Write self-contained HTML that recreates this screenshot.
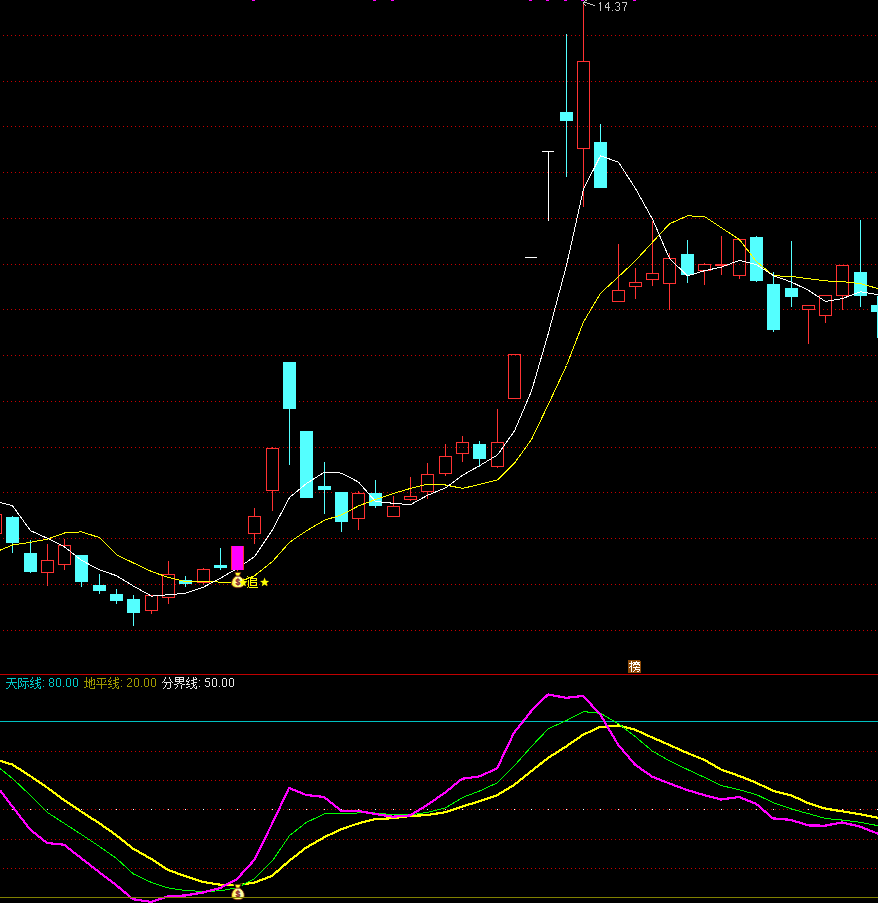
<!DOCTYPE html>
<html><head><meta charset="utf-8"><style>
html,body{margin:0;padding:0;background:#000;width:878px;height:903px;overflow:hidden}
</style></head><body>
<svg width="878" height="903" viewBox="0 0 878 903" style="position:absolute;left:0;top:0">
<rect x="0" y="0" width="878" height="903" fill="#000"/>
<defs><pattern id="dots" x="3" y="0" width="4" height="1" patternUnits="userSpaceOnUse"><rect x="0" y="0" width="1" height="1" fill="#c80000"/></pattern></defs>
<g shape-rendering="crispEdges">
<rect x="3" y="35" width="875" height="1" fill="url(#dots)"/>
<rect x="3" y="81" width="875" height="1" fill="url(#dots)"/>
<rect x="3" y="126" width="875" height="1" fill="url(#dots)"/>
<rect x="3" y="172" width="875" height="1" fill="url(#dots)"/>
<rect x="3" y="218" width="875" height="1" fill="url(#dots)"/>
<rect x="3" y="264" width="875" height="1" fill="url(#dots)"/>
<rect x="3" y="309" width="875" height="1" fill="url(#dots)"/>
<rect x="3" y="355" width="875" height="1" fill="url(#dots)"/>
<rect x="3" y="401" width="875" height="1" fill="url(#dots)"/>
<rect x="3" y="447" width="875" height="1" fill="url(#dots)"/>
<rect x="3" y="492" width="875" height="1" fill="url(#dots)"/>
<rect x="3" y="538" width="875" height="1" fill="url(#dots)"/>
<rect x="3" y="584" width="875" height="1" fill="url(#dots)"/>
<rect x="3" y="630" width="875" height="1" fill="url(#dots)"/>
<rect x="3" y="751" width="875" height="1" fill="url(#dots)"/>
<rect x="3" y="780" width="875" height="1" fill="url(#dots)"/>
<rect x="3" y="809" width="875" height="1" fill="url(#dots)"/>
<rect x="3" y="839" width="875" height="1" fill="url(#dots)"/>
<rect x="3" y="868" width="875" height="1" fill="url(#dots)"/>
<rect x="12" y="809" width="1" height="1" fill="#fff"/>
<rect x="30" y="809" width="1" height="1" fill="#fff"/>
<rect x="47" y="809" width="1" height="1" fill="#fff"/>
<rect x="64" y="809" width="1" height="1" fill="#fff"/>
<rect x="81" y="809" width="1" height="1" fill="#fff"/>
<rect x="99" y="809" width="1" height="1" fill="#fff"/>
<rect x="116" y="809" width="1" height="1" fill="#fff"/>
<rect x="133" y="809" width="1" height="1" fill="#fff"/>
<rect x="151" y="809" width="1" height="1" fill="#fff"/>
<rect x="168" y="809" width="1" height="1" fill="#fff"/>
<rect x="185" y="809" width="1" height="1" fill="#fff"/>
<rect x="203" y="809" width="1" height="1" fill="#fff"/>
<rect x="220" y="809" width="1" height="1" fill="#fff"/>
<rect x="237" y="809" width="1" height="1" fill="#fff"/>
<rect x="254" y="809" width="1" height="1" fill="#fff"/>
<rect x="272" y="809" width="1" height="1" fill="#fff"/>
<rect x="289" y="809" width="1" height="1" fill="#fff"/>
<rect x="306" y="809" width="1" height="1" fill="#fff"/>
<rect x="324" y="809" width="1" height="1" fill="#fff"/>
<rect x="341" y="809" width="1" height="1" fill="#fff"/>
<rect x="358" y="809" width="1" height="1" fill="#fff"/>
<rect x="375" y="809" width="1" height="1" fill="#fff"/>
<rect x="393" y="809" width="1" height="1" fill="#fff"/>
<rect x="410" y="809" width="1" height="1" fill="#fff"/>
<rect x="427" y="809" width="1" height="1" fill="#fff"/>
<rect x="445" y="809" width="1" height="1" fill="#fff"/>
<rect x="462" y="809" width="1" height="1" fill="#fff"/>
<rect x="479" y="809" width="1" height="1" fill="#fff"/>
<rect x="497" y="809" width="1" height="1" fill="#fff"/>
<rect x="514" y="809" width="1" height="1" fill="#fff"/>
<rect x="531" y="809" width="1" height="1" fill="#fff"/>
<rect x="548" y="809" width="1" height="1" fill="#fff"/>
<rect x="566" y="809" width="1" height="1" fill="#fff"/>
<rect x="583" y="809" width="1" height="1" fill="#fff"/>
<rect x="600" y="809" width="1" height="1" fill="#fff"/>
<rect x="618" y="809" width="1" height="1" fill="#fff"/>
<rect x="635" y="809" width="1" height="1" fill="#fff"/>
<rect x="652" y="809" width="1" height="1" fill="#fff"/>
<rect x="669" y="809" width="1" height="1" fill="#fff"/>
<rect x="687" y="809" width="1" height="1" fill="#fff"/>
<rect x="704" y="809" width="1" height="1" fill="#fff"/>
<rect x="721" y="809" width="1" height="1" fill="#fff"/>
<rect x="739" y="809" width="1" height="1" fill="#fff"/>
<rect x="756" y="809" width="1" height="1" fill="#fff"/>
<rect x="773" y="809" width="1" height="1" fill="#fff"/>
<rect x="791" y="809" width="1" height="1" fill="#fff"/>
<rect x="808" y="809" width="1" height="1" fill="#fff"/>
<rect x="825" y="809" width="1" height="1" fill="#fff"/>
<rect x="842" y="809" width="1" height="1" fill="#fff"/>
<rect x="860" y="809" width="1" height="1" fill="#fff"/>
<rect x="877" y="809" width="1" height="1" fill="#fff"/>
<rect x="0" y="674" width="878" height="1" fill="#c00000"/>
<rect x="0" y="721" width="878" height="1" fill="#00c0c0"/>
</g>
<g shape-rendering="crispEdges">
<rect x="-11" y="514" width="13" height="1" fill="#ff3232"/>
<rect x="-11" y="533" width="13" height="1" fill="#ff3232"/>
<rect x="-11" y="514" width="1" height="20" fill="#ff3232"/>
<rect x="1" y="514" width="1" height="20" fill="#ff3232"/>
<rect x="12" y="516" width="1" height="1" fill="#54ffff"/>
<rect x="12" y="543" width="1" height="10" fill="#54ffff"/>
<rect x="6" y="517" width="13" height="26" fill="#54ffff"/>
<rect x="30" y="540" width="1" height="13" fill="#54ffff"/>
<rect x="30" y="572" width="1" height="1" fill="#54ffff"/>
<rect x="24" y="553" width="13" height="19" fill="#54ffff"/>
<rect x="47" y="544" width="1" height="16" fill="#ff3232"/>
<rect x="47" y="573" width="1" height="13" fill="#ff3232"/>
<rect x="41" y="560" width="13" height="1" fill="#ff3232"/>
<rect x="41" y="572" width="13" height="1" fill="#ff3232"/>
<rect x="41" y="560" width="1" height="13" fill="#ff3232"/>
<rect x="53" y="560" width="1" height="13" fill="#ff3232"/>
<rect x="64" y="539" width="1" height="6" fill="#ff3232"/>
<rect x="64" y="565" width="1" height="5" fill="#ff3232"/>
<rect x="58" y="545" width="13" height="1" fill="#ff3232"/>
<rect x="58" y="564" width="13" height="1" fill="#ff3232"/>
<rect x="58" y="545" width="1" height="20" fill="#ff3232"/>
<rect x="70" y="545" width="1" height="20" fill="#ff3232"/>
<rect x="81" y="582" width="1" height="5" fill="#54ffff"/>
<rect x="75" y="555" width="13" height="27" fill="#54ffff"/>
<rect x="99" y="574" width="1" height="11" fill="#54ffff"/>
<rect x="99" y="591" width="1" height="3" fill="#54ffff"/>
<rect x="93" y="585" width="13" height="6" fill="#54ffff"/>
<rect x="116" y="589" width="1" height="5" fill="#54ffff"/>
<rect x="116" y="601" width="1" height="3" fill="#54ffff"/>
<rect x="110" y="594" width="13" height="7" fill="#54ffff"/>
<rect x="133" y="595" width="1" height="4" fill="#54ffff"/>
<rect x="133" y="613" width="1" height="13" fill="#54ffff"/>
<rect x="127" y="599" width="13" height="14" fill="#54ffff"/>
<rect x="151" y="611" width="1" height="3" fill="#ff3232"/>
<rect x="145" y="595" width="13" height="1" fill="#ff3232"/>
<rect x="145" y="610" width="13" height="1" fill="#ff3232"/>
<rect x="145" y="595" width="1" height="16" fill="#ff3232"/>
<rect x="157" y="595" width="1" height="16" fill="#ff3232"/>
<rect x="168" y="561" width="1" height="13" fill="#ff3232"/>
<rect x="168" y="598" width="1" height="6" fill="#ff3232"/>
<rect x="162" y="574" width="13" height="1" fill="#ff3232"/>
<rect x="162" y="597" width="13" height="1" fill="#ff3232"/>
<rect x="162" y="574" width="1" height="24" fill="#ff3232"/>
<rect x="174" y="574" width="1" height="24" fill="#ff3232"/>
<rect x="185" y="576" width="1" height="4" fill="#54ffff"/>
<rect x="185" y="584" width="1" height="3" fill="#54ffff"/>
<rect x="179" y="580" width="13" height="4" fill="#54ffff"/>
<rect x="203" y="568" width="1" height="1" fill="#ff3232"/>
<rect x="203" y="583" width="1" height="2" fill="#ff3232"/>
<rect x="197" y="569" width="13" height="1" fill="#ff3232"/>
<rect x="197" y="582" width="13" height="1" fill="#ff3232"/>
<rect x="197" y="569" width="1" height="14" fill="#ff3232"/>
<rect x="209" y="569" width="1" height="14" fill="#ff3232"/>
<rect x="220" y="548" width="1" height="17" fill="#54ffff"/>
<rect x="220" y="568" width="1" height="2" fill="#54ffff"/>
<rect x="214" y="565" width="13" height="3" fill="#54ffff"/>
<rect x="254" y="508" width="1" height="8" fill="#ff3232"/>
<rect x="254" y="534" width="1" height="10" fill="#ff3232"/>
<rect x="248" y="516" width="13" height="1" fill="#ff3232"/>
<rect x="248" y="533" width="13" height="1" fill="#ff3232"/>
<rect x="248" y="516" width="1" height="18" fill="#ff3232"/>
<rect x="260" y="516" width="1" height="18" fill="#ff3232"/>
<rect x="272" y="447" width="1" height="1" fill="#ff3232"/>
<rect x="272" y="491" width="1" height="20" fill="#ff3232"/>
<rect x="266" y="448" width="13" height="1" fill="#ff3232"/>
<rect x="266" y="490" width="13" height="1" fill="#ff3232"/>
<rect x="266" y="448" width="1" height="43" fill="#ff3232"/>
<rect x="278" y="448" width="1" height="43" fill="#ff3232"/>
<rect x="289" y="409" width="1" height="56" fill="#54ffff"/>
<rect x="283" y="362" width="13" height="47" fill="#54ffff"/>
<rect x="300" y="431" width="13" height="67" fill="#54ffff"/>
<rect x="324" y="462" width="1" height="24" fill="#54ffff"/>
<rect x="324" y="490" width="1" height="24" fill="#54ffff"/>
<rect x="318" y="486" width="13" height="4" fill="#54ffff"/>
<rect x="341" y="522" width="1" height="10" fill="#54ffff"/>
<rect x="335" y="492" width="13" height="30" fill="#54ffff"/>
<rect x="358" y="491" width="1" height="2" fill="#ff3232"/>
<rect x="358" y="519" width="1" height="11" fill="#ff3232"/>
<rect x="352" y="493" width="13" height="1" fill="#ff3232"/>
<rect x="352" y="518" width="13" height="1" fill="#ff3232"/>
<rect x="352" y="493" width="1" height="26" fill="#ff3232"/>
<rect x="364" y="493" width="1" height="26" fill="#ff3232"/>
<rect x="375" y="480" width="1" height="13" fill="#54ffff"/>
<rect x="375" y="506" width="1" height="2" fill="#54ffff"/>
<rect x="369" y="493" width="13" height="13" fill="#54ffff"/>
<rect x="393" y="496" width="1" height="10" fill="#ff3232"/>
<rect x="387" y="506" width="13" height="1" fill="#ff3232"/>
<rect x="387" y="516" width="13" height="1" fill="#ff3232"/>
<rect x="387" y="506" width="1" height="11" fill="#ff3232"/>
<rect x="399" y="506" width="1" height="11" fill="#ff3232"/>
<rect x="410" y="477" width="1" height="19" fill="#ff3232"/>
<rect x="410" y="500" width="1" height="1" fill="#ff3232"/>
<rect x="404" y="496" width="13" height="1" fill="#ff3232"/>
<rect x="404" y="499" width="13" height="1" fill="#ff3232"/>
<rect x="404" y="496" width="1" height="4" fill="#ff3232"/>
<rect x="416" y="496" width="1" height="4" fill="#ff3232"/>
<rect x="427" y="463" width="1" height="11" fill="#ff3232"/>
<rect x="427" y="492" width="1" height="7" fill="#ff3232"/>
<rect x="421" y="474" width="13" height="1" fill="#ff3232"/>
<rect x="421" y="491" width="13" height="1" fill="#ff3232"/>
<rect x="421" y="474" width="1" height="18" fill="#ff3232"/>
<rect x="433" y="474" width="1" height="18" fill="#ff3232"/>
<rect x="445" y="444" width="1" height="12" fill="#ff3232"/>
<rect x="445" y="474" width="1" height="2" fill="#ff3232"/>
<rect x="439" y="456" width="13" height="1" fill="#ff3232"/>
<rect x="439" y="473" width="13" height="1" fill="#ff3232"/>
<rect x="439" y="456" width="1" height="18" fill="#ff3232"/>
<rect x="451" y="456" width="1" height="18" fill="#ff3232"/>
<rect x="462" y="436" width="1" height="6" fill="#ff3232"/>
<rect x="462" y="454" width="1" height="8" fill="#ff3232"/>
<rect x="456" y="442" width="13" height="1" fill="#ff3232"/>
<rect x="456" y="453" width="13" height="1" fill="#ff3232"/>
<rect x="456" y="442" width="1" height="12" fill="#ff3232"/>
<rect x="468" y="442" width="1" height="12" fill="#ff3232"/>
<rect x="479" y="441" width="1" height="3" fill="#54ffff"/>
<rect x="479" y="459" width="1" height="8" fill="#54ffff"/>
<rect x="473" y="444" width="13" height="15" fill="#54ffff"/>
<rect x="497" y="409" width="1" height="33" fill="#ff3232"/>
<rect x="497" y="467" width="1" height="1" fill="#ff3232"/>
<rect x="491" y="442" width="13" height="1" fill="#ff3232"/>
<rect x="491" y="466" width="13" height="1" fill="#ff3232"/>
<rect x="491" y="442" width="1" height="25" fill="#ff3232"/>
<rect x="503" y="442" width="1" height="25" fill="#ff3232"/>
<rect x="508" y="354" width="13" height="1" fill="#ff3232"/>
<rect x="508" y="398" width="13" height="1" fill="#ff3232"/>
<rect x="508" y="354" width="1" height="45" fill="#ff3232"/>
<rect x="520" y="354" width="1" height="45" fill="#ff3232"/>
<rect x="525" y="257" width="12" height="1" fill="#fff"/>
<rect x="542" y="151" width="12" height="1" fill="#fff"/>
<rect x="548" y="151" width="1" height="70" fill="#fff"/>
<rect x="566" y="34" width="1" height="78" fill="#54ffff"/>
<rect x="566" y="121" width="1" height="56" fill="#54ffff"/>
<rect x="560" y="112" width="13" height="9" fill="#54ffff"/>
<rect x="583" y="4" width="1" height="57" fill="#ff3232"/>
<rect x="583" y="149" width="1" height="58" fill="#ff3232"/>
<rect x="577" y="61" width="13" height="1" fill="#ff3232"/>
<rect x="577" y="148" width="13" height="1" fill="#ff3232"/>
<rect x="577" y="61" width="1" height="88" fill="#ff3232"/>
<rect x="589" y="61" width="1" height="88" fill="#ff3232"/>
<rect x="600" y="124" width="1" height="18" fill="#54ffff"/>
<rect x="594" y="142" width="13" height="46" fill="#54ffff"/>
<rect x="618" y="244" width="1" height="46" fill="#ff3232"/>
<rect x="612" y="290" width="13" height="1" fill="#ff3232"/>
<rect x="612" y="301" width="13" height="1" fill="#ff3232"/>
<rect x="612" y="290" width="1" height="12" fill="#ff3232"/>
<rect x="624" y="290" width="1" height="12" fill="#ff3232"/>
<rect x="635" y="268" width="1" height="14" fill="#ff3232"/>
<rect x="635" y="287" width="1" height="12" fill="#ff3232"/>
<rect x="629" y="282" width="13" height="1" fill="#ff3232"/>
<rect x="629" y="286" width="13" height="1" fill="#ff3232"/>
<rect x="629" y="282" width="1" height="5" fill="#ff3232"/>
<rect x="641" y="282" width="1" height="5" fill="#ff3232"/>
<rect x="652" y="221" width="1" height="52" fill="#ff3232"/>
<rect x="652" y="280" width="1" height="6" fill="#ff3232"/>
<rect x="646" y="273" width="13" height="1" fill="#ff3232"/>
<rect x="646" y="279" width="13" height="1" fill="#ff3232"/>
<rect x="646" y="273" width="1" height="7" fill="#ff3232"/>
<rect x="658" y="273" width="1" height="7" fill="#ff3232"/>
<rect x="669" y="253" width="1" height="5" fill="#ff3232"/>
<rect x="669" y="284" width="1" height="26" fill="#ff3232"/>
<rect x="663" y="258" width="13" height="1" fill="#ff3232"/>
<rect x="663" y="283" width="13" height="1" fill="#ff3232"/>
<rect x="663" y="258" width="1" height="26" fill="#ff3232"/>
<rect x="675" y="258" width="1" height="26" fill="#ff3232"/>
<rect x="687" y="240" width="1" height="14" fill="#54ffff"/>
<rect x="687" y="275" width="1" height="8" fill="#54ffff"/>
<rect x="681" y="254" width="13" height="21" fill="#54ffff"/>
<rect x="704" y="263" width="1" height="1" fill="#ff3232"/>
<rect x="704" y="271" width="1" height="14" fill="#ff3232"/>
<rect x="698" y="264" width="13" height="1" fill="#ff3232"/>
<rect x="698" y="270" width="13" height="1" fill="#ff3232"/>
<rect x="698" y="264" width="1" height="7" fill="#ff3232"/>
<rect x="710" y="264" width="1" height="7" fill="#ff3232"/>
<rect x="721" y="236" width="1" height="28" fill="#ff3232"/>
<rect x="721" y="266" width="1" height="9" fill="#ff3232"/>
<rect x="715" y="264" width="13" height="1" fill="#ff3232"/>
<rect x="715" y="265" width="13" height="1" fill="#ff3232"/>
<rect x="715" y="264" width="1" height="2" fill="#ff3232"/>
<rect x="727" y="264" width="1" height="2" fill="#ff3232"/>
<rect x="739" y="276" width="1" height="3" fill="#ff3232"/>
<rect x="733" y="239" width="13" height="1" fill="#ff3232"/>
<rect x="733" y="275" width="13" height="1" fill="#ff3232"/>
<rect x="733" y="239" width="1" height="37" fill="#ff3232"/>
<rect x="745" y="239" width="1" height="37" fill="#ff3232"/>
<rect x="756" y="236" width="1" height="1" fill="#54ffff"/>
<rect x="756" y="281" width="1" height="1" fill="#54ffff"/>
<rect x="750" y="237" width="13" height="44" fill="#54ffff"/>
<rect x="773" y="272" width="1" height="12" fill="#54ffff"/>
<rect x="773" y="330" width="1" height="2" fill="#54ffff"/>
<rect x="767" y="284" width="13" height="46" fill="#54ffff"/>
<rect x="791" y="241" width="1" height="47" fill="#54ffff"/>
<rect x="791" y="297" width="1" height="10" fill="#54ffff"/>
<rect x="785" y="288" width="13" height="9" fill="#54ffff"/>
<rect x="808" y="310" width="1" height="34" fill="#ff3232"/>
<rect x="802" y="305" width="13" height="1" fill="#ff3232"/>
<rect x="802" y="309" width="13" height="1" fill="#ff3232"/>
<rect x="802" y="305" width="1" height="5" fill="#ff3232"/>
<rect x="814" y="305" width="1" height="5" fill="#ff3232"/>
<rect x="825" y="316" width="1" height="7" fill="#ff3232"/>
<rect x="819" y="295" width="13" height="1" fill="#ff3232"/>
<rect x="819" y="315" width="13" height="1" fill="#ff3232"/>
<rect x="819" y="295" width="1" height="21" fill="#ff3232"/>
<rect x="831" y="295" width="1" height="21" fill="#ff3232"/>
<rect x="842" y="296" width="1" height="14" fill="#ff3232"/>
<rect x="836" y="265" width="13" height="1" fill="#ff3232"/>
<rect x="836" y="295" width="13" height="1" fill="#ff3232"/>
<rect x="836" y="265" width="1" height="31" fill="#ff3232"/>
<rect x="848" y="265" width="1" height="31" fill="#ff3232"/>
<rect x="860" y="220" width="1" height="52" fill="#54ffff"/>
<rect x="860" y="296" width="1" height="11" fill="#54ffff"/>
<rect x="854" y="272" width="13" height="24" fill="#54ffff"/>
<rect x="877" y="296" width="1" height="9" fill="#54ffff"/>
<rect x="877" y="312" width="1" height="26" fill="#54ffff"/>
<rect x="871" y="305" width="13" height="7" fill="#54ffff"/>
</g>
<polyline points="-4.5,552.1 12.5,545.0 30.5,542.3 47.5,539.1 64.5,533.0 81.5,531.8 99.5,537.6 116.5,554.7 133.5,563.0 151.5,571.5 168.5,577.5 185.5,581.6 203.5,581.4 220.5,582.1 237.5,582.2 254.5,575.7 272.5,561.5 289.5,542.3 306.5,530.8 324.5,520.2 341.5,514.9 358.5,505.9 375.5,499.5 393.5,493.4 410.5,488.4 427.5,484.2 445.5,485.0 462.5,488.4 479.5,484.5 497.5,479.8 514.5,463.1 531.5,439.5 548.5,404.1 566.5,365.5 583.5,322.0 600.5,293.3 618.5,276.7 635.5,260.7 652.5,242.2 669.5,223.8 687.5,215.8 704.5,216.5 721.5,227.8 739.5,239.7 756.5,261.6 773.5,275.8 791.5,276.4 808.5,278.7 825.5,280.9 842.5,281.6 860.5,283.7 877.5,288.4 885.5,290.6" fill="none" stroke="#ffff00" stroke-width="1" stroke-linejoin="round" shape-rendering="crispEdges"/>
<polyline points="-4.5,501.5 12.5,505.7 30.5,530.7 47.5,538.3 64.5,546.9 81.5,560.3 99.5,569.9 116.5,575.7 133.5,586.1 151.5,596.1 168.5,594.7 185.5,593.3 203.5,587.1 220.5,578.1 237.5,568.3 254.5,556.7 272.5,529.7 289.5,497.5 306.5,483.5 324.5,472.1 341.5,473.1 358.5,482.1 375.5,501.5 393.5,503.3 410.5,504.7 427.5,495.3 445.5,487.9 462.5,475.3 479.5,465.7 497.5,454.9 514.5,430.9 531.5,391.1 548.5,332.9 566.5,265.3 583.5,189.1 600.5,155.7 618.5,162.3 635.5,188.5 652.5,219.1 669.5,258.5 687.5,275.9 704.5,270.7 721.5,267.1 739.5,260.3 756.5,264.7 773.5,275.7 791.5,282.1 808.5,290.3 825.5,301.5 842.5,298.5 860.5,291.7 877.5,294.7 885.5,296.1" fill="none" stroke="#ffffff" stroke-width="1" stroke-linejoin="round" shape-rendering="crispEdges"/>
<g shape-rendering="crispEdges"><rect x="237" y="570" width="1" height="2" fill="#ff3232"/><rect x="231" y="546" width="13" height="24" fill="#ff3232"/><rect x="232" y="546" width="11" height="24" fill="#ff00ff"/></g>
<polyline points="0,760.8 12.0,764.4 30.0,775.8 47.0,787.5 64.0,800.1 81.0,811.5 99.0,823.0 116.0,835.0 133.0,848.6 151.0,858.8 168.0,870.0 185.0,876.0 203.0,881.9 220.0,884.7 237.0,885.0 254.0,882.8 272.0,875.9 289.0,861.0 306.0,847.7 324.0,837.4 341.0,829.2 358.0,823.5 375.0,819.2 393.0,818.2 410.0,816.0 427.0,815.1 445.0,812.3 462.0,806.6 479.0,801.5 497.0,795.2 514.0,785.0 531.0,771.4 548.0,758.0 566.0,746.6 583.0,734.8 600.0,727.0 618.0,725.5 635.0,729.7 652.0,737.4 669.0,744.8 687.0,752.9 704.0,759.7 721.0,769.5 739.0,775.9 756.0,782.6 773.0,790.8 791.0,795.3 808.0,803.0 825.0,808.5 842.0,811.3 860.0,814.2 877.0,817.6 885,819.2" fill="none" stroke="#ffff00" stroke-width="2.2" stroke-linejoin="round" shape-rendering="crispEdges"/>
<polyline points="0,768.5 12.5,778.5 30.5,795.5 47.5,812.5 64.5,823.5 81.5,834.5 99.5,846.5 116.5,858.5 133.5,874.0 151.5,882.5 168.5,888.0 185.5,890.5 203.5,891.5 220.5,890.8 237.5,887.7 254.5,878.6 272.5,860.8 289.5,835.6 306.5,822.3 324.5,813.9 341.5,813.9 358.5,812.9 375.5,813.0 393.5,814.8 410.5,814.8 427.5,812.3 445.5,807.9 462.5,797.5 479.5,791.0 497.5,782.7 514.5,765.6 531.5,746.4 548.5,728.6 566.5,720.5 583.5,711.6 600.5,713.3 618.5,723.8 635.5,736.8 652.5,751.2 669.5,760.8 687.5,769.5 704.5,777.4 721.5,785.6 739.5,789.8 756.5,794.6 773.5,802.8 791.5,809.0 808.5,813.7 825.5,818.5 842.5,820.1 860.5,822.3 877.5,825.6 885,827.2" fill="none" stroke="#00ff00" stroke-width="1" stroke-linejoin="round" shape-rendering="crispEdges"/>
<polyline points="0,790.2 12.0,806.0 30.0,829.4 47.0,843.0 64.0,844.7 81.0,858.0 99.0,872.0 116.0,885.0 133.0,899.2 151.0,901.9 168.0,896.2 185.0,895.5 203.0,892.5 220.0,888.1 237.0,879.0 254.0,860.3 272.0,824.0 289.0,788.0 306.0,794.9 324.0,797.0 341.0,810.7 358.0,810.8 375.0,814.0 393.0,816.7 410.0,815.5 427.0,805.1 445.0,792.6 462.0,778.8 479.0,776.5 497.0,768.5 514.0,732.8 531.0,711.4 548.0,694.5 566.0,697.8 583.0,696.0 600.0,714.0 618.0,744.5 635.0,764.6 652.0,776.6 669.0,783.3 687.0,790.0 704.0,795.1 721.0,799.5 739.0,797.0 756.0,803.7 773.0,818.4 791.0,819.9 808.0,825.4 825.0,825.7 842.0,822.4 860.0,826.6 877.0,833.3 885,836.5" fill="none" stroke="#ff00ff" stroke-width="2.2" stroke-linejoin="round" shape-rendering="crispEdges"/>
<path d="M7 678h9v1h-9zM11 679h1v1h-1zM11 680h1v1h-1zM11 681h1v1h-1zM6 682h11v1h-11zM10 683h1v1h-1zM12 683h1v1h-1zM10 684h1v1h-1zM12 684h1v1h-1zM9 685h1v1h-1zM13 685h1v1h-1zM9 686h1v1h-1zM14 686h1v1h-1zM8 687h1v1h-1zM14 687h1v1h-1zM6 688h2v1h-2zM15 688h2v1h-2zM18 678h4v1h-4zM23 678h5v1h-5zM18 679h1v1h-1zM21 679h1v1h-1zM18 680h1v1h-1zM21 680h1v1h-1zM18 681h1v1h-1zM20 681h1v1h-1zM22 681h7v1h-7zM18 682h1v1h-1zM20 682h1v1h-1zM25 682h1v1h-1zM18 683h1v1h-1zM21 683h1v1h-1zM25 683h1v1h-1zM18 684h1v1h-1zM21 684h1v1h-1zM23 684h1v1h-1zM25 684h1v1h-1zM27 684h1v1h-1zM18 685h1v1h-1zM21 685h1v1h-1zM23 685h1v1h-1zM25 685h1v1h-1zM28 685h1v1h-1zM18 686h3v1h-3zM22 686h1v1h-1zM25 686h1v1h-1zM28 686h1v1h-1zM18 687h1v1h-1zM25 687h1v1h-1zM18 688h1v1h-1zM24 688h2v1h-2zM32 677h1v1h-1zM37 677h1v1h-1zM39 677h1v1h-1zM32 678h1v1h-1zM37 678h1v1h-1zM40 678h1v1h-1zM31 679h1v1h-1zM37 679h4v1h-4zM30 680h1v1h-1zM33 680h1v1h-1zM35 680h3v1h-3zM30 681h3v1h-3zM37 681h1v1h-1zM32 682h1v1h-1zM37 682h4v1h-4zM31 683h1v1h-1zM35 683h3v1h-3zM30 684h4v1h-4zM37 684h1v1h-1zM39 684h1v1h-1zM37 685h2v1h-2zM32 686h2v1h-2zM37 686h1v1h-1zM40 686h1v1h-1zM30 687h2v1h-2zM36 687h1v1h-1zM38 687h1v1h-1zM40 687h1v1h-1zM34 688h2v1h-2zM39 688h2v1h-2zM43 680h1v1h-1zM43 686h1v1h-1zM50 678h3v1h-3zM49 679h1v1h-1zM53 679h1v1h-1zM49 680h1v1h-1zM53 680h1v1h-1zM49 681h1v1h-1zM53 681h1v1h-1zM50 682h3v1h-3zM49 683h1v1h-1zM53 683h1v1h-1zM49 684h1v1h-1zM53 684h1v1h-1zM49 685h1v1h-1zM53 685h1v1h-1zM50 686h3v1h-3zM57 678h3v1h-3zM56 679h1v1h-1zM60 679h1v1h-1zM56 680h1v1h-1zM60 680h1v1h-1zM56 681h1v1h-1zM60 681h1v1h-1zM56 682h1v1h-1zM60 682h1v1h-1zM56 683h1v1h-1zM60 683h1v1h-1zM56 684h1v1h-1zM60 684h1v1h-1zM56 685h1v1h-1zM60 685h1v1h-1zM57 686h3v1h-3zM63 686h1v1h-1zM67 678h3v1h-3zM66 679h1v1h-1zM70 679h1v1h-1zM66 680h1v1h-1zM70 680h1v1h-1zM66 681h1v1h-1zM70 681h1v1h-1zM66 682h1v1h-1zM70 682h1v1h-1zM66 683h1v1h-1zM70 683h1v1h-1zM66 684h1v1h-1zM70 684h1v1h-1zM66 685h1v1h-1zM70 685h1v1h-1zM67 686h3v1h-3zM74 678h3v1h-3zM73 679h1v1h-1zM77 679h1v1h-1zM73 680h1v1h-1zM77 680h1v1h-1zM73 681h1v1h-1zM77 681h1v1h-1zM73 682h1v1h-1zM77 682h1v1h-1zM73 683h1v1h-1zM77 683h1v1h-1zM73 684h1v1h-1zM77 684h1v1h-1zM73 685h1v1h-1zM77 685h1v1h-1zM74 686h3v1h-3z" fill="#00c8c8" shape-rendering="crispEdges"/>
<path d="M86 677h1v1h-1zM91 677h1v1h-1zM86 678h1v1h-1zM91 678h1v1h-1zM86 679h1v1h-1zM89 679h1v1h-1zM91 679h1v1h-1zM93 679h2v1h-2zM86 680h1v1h-1zM89 680h1v1h-1zM91 680h2v1h-2zM94 680h1v1h-1zM84 681h4v1h-4zM89 681h3v1h-3zM94 681h1v1h-1zM86 682h1v1h-1zM88 682h2v1h-2zM91 682h1v1h-1zM94 682h1v1h-1zM86 683h1v1h-1zM89 683h1v1h-1zM91 683h1v1h-1zM94 683h1v1h-1zM86 684h1v1h-1zM89 684h1v1h-1zM91 684h1v1h-1zM93 684h2v1h-2zM86 685h1v1h-1zM89 685h1v1h-1zM91 685h1v1h-1zM86 686h2v1h-2zM89 686h1v1h-1zM94 686h1v1h-1zM84 687h2v1h-2zM89 687h1v1h-1zM94 687h1v1h-1zM90 688h5v1h-5zM97 678h9v1h-9zM101 679h1v1h-1zM97 680h1v1h-1zM101 680h1v1h-1zM105 680h1v1h-1zM98 681h1v1h-1zM101 681h1v1h-1zM105 681h1v1h-1zM98 682h1v1h-1zM101 682h1v1h-1zM104 682h1v1h-1zM101 683h1v1h-1zM96 684h11v1h-11zM101 685h1v1h-1zM101 686h1v1h-1zM101 687h1v1h-1zM101 688h1v1h-1zM110 677h1v1h-1zM115 677h1v1h-1zM117 677h1v1h-1zM110 678h1v1h-1zM115 678h1v1h-1zM118 678h1v1h-1zM109 679h1v1h-1zM115 679h4v1h-4zM108 680h1v1h-1zM111 680h1v1h-1zM113 680h3v1h-3zM108 681h3v1h-3zM115 681h1v1h-1zM110 682h1v1h-1zM115 682h4v1h-4zM109 683h1v1h-1zM113 683h3v1h-3zM108 684h4v1h-4zM115 684h1v1h-1zM117 684h1v1h-1zM115 685h2v1h-2zM110 686h2v1h-2zM115 686h1v1h-1zM118 686h1v1h-1zM108 687h2v1h-2zM114 687h1v1h-1zM116 687h1v1h-1zM118 687h1v1h-1zM112 688h2v1h-2zM117 688h2v1h-2zM121 680h1v1h-1zM121 686h1v1h-1zM128 678h3v1h-3zM127 679h1v1h-1zM131 679h1v1h-1zM131 680h1v1h-1zM131 681h1v1h-1zM130 682h1v1h-1zM129 683h1v1h-1zM128 684h1v1h-1zM127 685h1v1h-1zM127 686h5v1h-5zM135 678h3v1h-3zM134 679h1v1h-1zM138 679h1v1h-1zM134 680h1v1h-1zM138 680h1v1h-1zM134 681h1v1h-1zM138 681h1v1h-1zM134 682h1v1h-1zM138 682h1v1h-1zM134 683h1v1h-1zM138 683h1v1h-1zM134 684h1v1h-1zM138 684h1v1h-1zM134 685h1v1h-1zM138 685h1v1h-1zM135 686h3v1h-3zM141 686h1v1h-1zM145 678h3v1h-3zM144 679h1v1h-1zM148 679h1v1h-1zM144 680h1v1h-1zM148 680h1v1h-1zM144 681h1v1h-1zM148 681h1v1h-1zM144 682h1v1h-1zM148 682h1v1h-1zM144 683h1v1h-1zM148 683h1v1h-1zM144 684h1v1h-1zM148 684h1v1h-1zM144 685h1v1h-1zM148 685h1v1h-1zM145 686h3v1h-3zM152 678h3v1h-3zM151 679h1v1h-1zM155 679h1v1h-1zM151 680h1v1h-1zM155 680h1v1h-1zM151 681h1v1h-1zM155 681h1v1h-1zM151 682h1v1h-1zM155 682h1v1h-1zM151 683h1v1h-1zM155 683h1v1h-1zM151 684h1v1h-1zM155 684h1v1h-1zM151 685h1v1h-1zM155 685h1v1h-1zM152 686h3v1h-3z" fill="#a09800" shape-rendering="crispEdges"/>
<path d="M165 677h1v1h-1zM169 677h1v1h-1zM165 678h1v1h-1zM169 678h1v1h-1zM164 679h1v1h-1zM170 679h1v1h-1zM164 680h1v1h-1zM170 680h1v1h-1zM163 681h1v1h-1zM171 681h1v1h-1zM162 682h1v1h-1zM164 682h7v1h-7zM172 682h1v1h-1zM166 683h1v1h-1zM170 683h1v1h-1zM166 684h1v1h-1zM170 684h1v1h-1zM165 685h1v1h-1zM170 685h1v1h-1zM165 686h1v1h-1zM170 686h1v1h-1zM164 687h1v1h-1zM170 687h1v1h-1zM163 688h1v1h-1zM167 688h3v1h-3zM175 677h9v1h-9zM175 678h1v1h-1zM179 678h1v1h-1zM183 678h1v1h-1zM175 679h9v1h-9zM175 680h1v1h-1zM179 680h1v1h-1zM183 680h1v1h-1zM175 681h9v1h-9zM179 682h1v1h-1zM177 683h2v1h-2zM180 683h2v1h-2zM174 684h3v1h-3zM182 684h3v1h-3zM177 685h1v1h-1zM181 685h1v1h-1zM177 686h1v1h-1zM181 686h1v1h-1zM176 687h1v1h-1zM181 687h1v1h-1zM175 688h1v1h-1zM181 688h1v1h-1zM188 677h1v1h-1zM193 677h1v1h-1zM195 677h1v1h-1zM188 678h1v1h-1zM193 678h1v1h-1zM196 678h1v1h-1zM187 679h1v1h-1zM193 679h4v1h-4zM186 680h1v1h-1zM189 680h1v1h-1zM191 680h3v1h-3zM186 681h3v1h-3zM193 681h1v1h-1zM188 682h1v1h-1zM193 682h4v1h-4zM187 683h1v1h-1zM191 683h3v1h-3zM186 684h4v1h-4zM193 684h1v1h-1zM195 684h1v1h-1zM193 685h2v1h-2zM188 686h2v1h-2zM193 686h1v1h-1zM196 686h1v1h-1zM186 687h2v1h-2zM192 687h1v1h-1zM194 687h1v1h-1zM196 687h1v1h-1zM190 688h2v1h-2zM195 688h2v1h-2zM199 680h1v1h-1zM199 686h1v1h-1zM206 678h4v1h-4zM205 679h1v1h-1zM205 680h1v1h-1zM205 681h4v1h-4zM209 682h1v1h-1zM209 683h1v1h-1zM209 684h1v1h-1zM205 685h1v1h-1zM209 685h1v1h-1zM206 686h3v1h-3zM213 678h3v1h-3zM212 679h1v1h-1zM216 679h1v1h-1zM212 680h1v1h-1zM216 680h1v1h-1zM212 681h1v1h-1zM216 681h1v1h-1zM212 682h1v1h-1zM216 682h1v1h-1zM212 683h1v1h-1zM216 683h1v1h-1zM212 684h1v1h-1zM216 684h1v1h-1zM212 685h1v1h-1zM216 685h1v1h-1zM213 686h3v1h-3zM219 686h1v1h-1zM223 678h3v1h-3zM222 679h1v1h-1zM226 679h1v1h-1zM222 680h1v1h-1zM226 680h1v1h-1zM222 681h1v1h-1zM226 681h1v1h-1zM222 682h1v1h-1zM226 682h1v1h-1zM222 683h1v1h-1zM226 683h1v1h-1zM222 684h1v1h-1zM226 684h1v1h-1zM222 685h1v1h-1zM226 685h1v1h-1zM223 686h3v1h-3zM230 678h3v1h-3zM229 679h1v1h-1zM233 679h1v1h-1zM229 680h1v1h-1zM233 680h1v1h-1zM229 681h1v1h-1zM233 681h1v1h-1zM229 682h1v1h-1zM233 682h1v1h-1zM229 683h1v1h-1zM233 683h1v1h-1zM229 684h1v1h-1zM233 684h1v1h-1zM229 685h1v1h-1zM233 685h1v1h-1zM230 686h3v1h-3z" fill="#e8e8e8" shape-rendering="crispEdges"/>
<path d="M600 2h1v1h-1zM599 3h2v1h-2zM600 4h1v1h-1zM600 5h1v1h-1zM600 6h1v1h-1zM600 7h1v1h-1zM600 8h1v1h-1zM600 9h1v1h-1zM600 10h1v1h-1zM608 2h1v1h-1zM607 3h2v1h-2zM606 4h1v1h-1zM608 4h1v1h-1zM605 5h1v1h-1zM608 5h1v1h-1zM605 6h1v1h-1zM608 6h1v1h-1zM605 7h5v1h-5zM608 8h1v1h-1zM608 9h1v1h-1zM608 10h1v1h-1zM612 10h1v1h-1zM616 2h3v1h-3zM615 3h1v1h-1zM619 3h1v1h-1zM619 4h1v1h-1zM619 5h1v1h-1zM617 6h2v1h-2zM619 7h1v1h-1zM619 8h1v1h-1zM615 9h1v1h-1zM619 9h1v1h-1zM616 10h3v1h-3zM622 2h5v1h-5zM626 3h1v1h-1zM626 4h1v1h-1zM625 5h1v1h-1zM625 6h1v1h-1zM624 7h1v1h-1zM624 8h1v1h-1zM624 9h1v1h-1zM624 10h1v1h-1z" fill="#c8c8c8" shape-rendering="crispEdges"/>
<path d="M583 2h4v1h-4z M587 3h3v1h-3z M590 4h3v1h-3z M593 5h2v1h-2z M584 1h1v1h-1z M585 0h2v1h-2z M583 3h1v1h-1z M584 4h1v1h-1z M585 5h1v1h-1z" fill="#c8c8c8" shape-rendering="crispEdges"/>
<path d="M252 0h3v1h-3zM373 0h3v1h-3zM391 0h3v1h-3zM529 0h3v1h-3zM546 0h3v1h-3zM564 0h3v1h-3zM581 0h3v1h-3zM633 0h3v1h-3z" fill="#ff00ff" shape-rendering="crispEdges"/>
<path d="M628 660h11l2 2v11h-13z" fill="#8c4a08" shape-rendering="crispEdges"/>
<path d="M631 661h1v1h-1zM636 661h1v1h-1zM631 662h1v1h-1zM633 662h7v1h-7zM629 663h4v1h-4zM634 663h2v1h-2zM637 663h2v1h-2zM631 664h1v1h-1zM633 664h7v1h-7zM631 665h1v1h-1zM633 665h1v1h-1zM639 665h1v1h-1zM630 666h2v1h-2zM636 666h1v1h-1zM629 667h1v1h-1zM631 667h1v1h-1zM633 667h7v1h-7zM631 668h1v1h-1zM635 668h1v1h-1zM631 669h1v1h-1zM635 669h5v1h-5zM631 670h1v1h-1zM634 670h1v1h-1zM639 670h1v1h-1zM631 671h1v1h-1zM633 671h1v1h-1zM637 671h2v1h-2z" fill="#ffffff" shape-rendering="crispEdges"/>
<path d="M247 576h1v1h-1zM248 577h1v1h-1zM250 577h3v1h-3zM250 578h7v1h-7zM245 579h2v1h-2zM250 579h1v1h-1zM256 579h1v1h-1zM248 580h1v1h-1zM250 580h7v1h-7zM248 581h1v1h-1zM250 581h1v1h-1zM248 582h1v1h-1zM250 582h7v1h-7zM248 583h1v1h-1zM250 583h1v1h-1zM256 583h1v1h-1zM248 584h1v1h-1zM250 584h1v1h-1zM256 584h1v1h-1zM248 585h1v1h-1zM250 585h7v1h-7zM248 586h1v1h-1zM247 587h1v1h-1zM249 587h9v1h-9z" fill="#ffff00" shape-rendering="crispEdges"/>
<defs><radialGradient id="bagg" cx="0.58" cy="0.5" r="0.62"><stop offset="0" stop-color="#ffffe0"/><stop offset="0.55" stop-color="#ffff90"/><stop offset="1" stop-color="#f4e800"/></radialGradient></defs>
<g transform="translate(229,569)">
<path d="M5.6 3.3 L12.1 3.3 L10.3 7.0 L7.2 7.0 Z" fill="#000" stroke="#000" stroke-width="2.2"/>
<path d="M5.8 3.4 L11.9 3.4 L10.2 6.9 L7.3 6.9 Z" fill="#ffff20" stroke="#6a1a1a" stroke-width="0.7"/>
<path d="M6.2 7.6 C3.6 9.3 2.5 12.3 2.5 14.5 C2.5 17.3 5.4 18.7 8.9 18.7 C12.4 18.7 15.3 17.3 15.3 14.5 C15.3 12.0 14.2 9.3 11.4 7.6 Z" fill="url(#bagg)" stroke="#6a1a1a" stroke-width="0.9"/>
<path d="M6.6 8.2 L11.0 8.2" stroke="#fffff0" stroke-width="0.9"/>
<text x="8.8" y="16.3" font-family="Liberation Sans, sans-serif" font-weight="bold" font-size="8.6" fill="#8a2a2a" stroke="#8a2a2a" stroke-width="0.35" text-anchor="middle">$</text>
</g>
<polygon points="243.20,578.00 244.42,580.93 247.57,581.18 245.17,583.24 245.90,586.32 243.20,584.67 240.50,586.32 241.23,583.24 238.83,581.18 241.98,580.93" fill="#ffff00"/>
<polygon points="264.60,577.60 265.87,580.65 269.17,580.92 266.65,583.07 267.42,586.28 264.60,584.56 261.78,586.28 262.55,583.07 260.03,580.92 263.33,580.65" fill="#ffff00"/>
<g transform="translate(229,881)">
<path d="M5.6 3.3 L12.1 3.3 L10.3 7.0 L7.2 7.0 Z" fill="#000" stroke="#000" stroke-width="2.2"/>
<path d="M5.8 3.4 L11.9 3.4 L10.2 6.9 L7.3 6.9 Z" fill="#ffff20" stroke="#6a1a1a" stroke-width="0.7"/>
<path d="M6.2 7.6 C3.6 9.3 2.5 12.3 2.5 14.5 C2.5 17.3 5.4 18.7 8.9 18.7 C12.4 18.7 15.3 17.3 15.3 14.5 C15.3 12.0 14.2 9.3 11.4 7.6 Z" fill="url(#bagg)" stroke="#6a1a1a" stroke-width="0.9"/>
<path d="M6.6 8.2 L11.0 8.2" stroke="#fffff0" stroke-width="0.9"/>
<text x="8.8" y="16.3" font-family="Liberation Sans, sans-serif" font-weight="bold" font-size="8.6" fill="#8a2a2a" stroke="#8a2a2a" stroke-width="0.35" text-anchor="middle">$</text>
</g>
<rect x="0" y="897" width="878" height="1" fill="#808000" shape-rendering="crispEdges"/>
</svg>
</body></html>
